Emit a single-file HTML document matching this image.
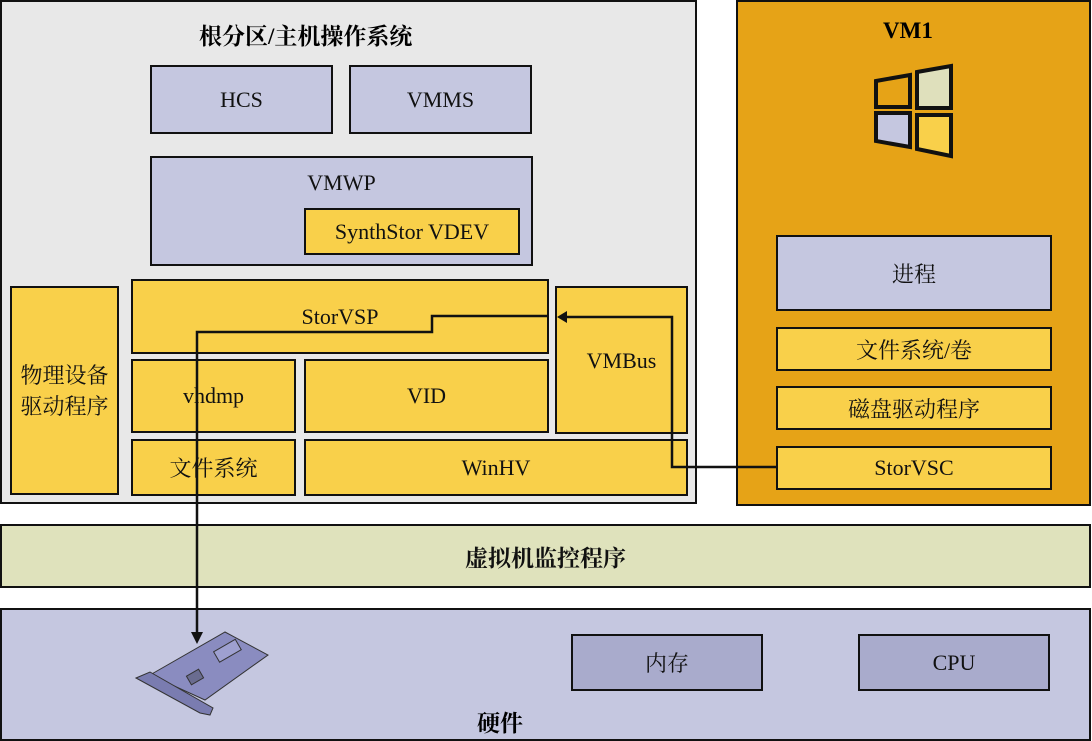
<!DOCTYPE html><html><head><meta charset="utf-8"><style>
body{margin:0;width:1092px;height:741px;background:#fff;position:relative;overflow:hidden;font-family:"Liberation Serif","Noto Serif CJK SC",serif;}
.b{position:absolute;box-sizing:border-box;border:2px solid #111;display:flex;align-items:center;justify-content:center;font-size:22px;color:#111;text-align:center;}
.y{background:#f9d04a}.l{background:#c5c7e0}
.t{position:absolute;font-weight:bold;font-size:23px;}
</style></head><body>
<div class="b" style="left:0;top:0;width:697px;height:504px;background:#e8e8e8"></div>
<div class="t" style="left:199px;top:18px">根分区/主机操作系统</div>
<div class="b l" style="left:150px;top:65px;width:183px;height:69px">HCS</div>
<div class="b l" style="left:349px;top:65px;width:183px;height:69px">VMMS</div>
<div class="b l" style="left:150px;top:156px;width:383px;height:110px;align-items:flex-start;padding-top:12px">VMWP</div>
<div class="b y" style="left:304px;top:208px;width:216px;height:47px">SynthStor VDEV</div>
<div class="b y" style="left:10px;top:286px;width:109px;height:209px;line-height:31px">物理设备<br>驱动程序</div>
<div class="b y" style="left:131px;top:279px;width:418px;height:75px">StorVSP</div>
<div class="b y" style="left:555px;top:286px;width:133px;height:148px;align-items:flex-start;padding-top:60px">VMBus</div>
<div class="b y" style="left:131px;top:359px;width:165px;height:74px">vhdmp</div>
<div class="b y" style="left:304px;top:359px;width:245px;height:74px">VID</div>
<div class="b y" style="left:131px;top:439px;width:165px;height:57px">文件系统</div>
<div class="b y" style="left:304px;top:439px;width:384px;height:57px">WinHV</div>
<div class="b" style="left:736px;top:0;width:355px;height:506px;background:#e6a317"></div>
<div class="t" style="left:883px;top:18px;font-family:'Liberation Serif',serif">VM1</div>
<div class="b l" style="left:776px;top:235px;width:276px;height:76px">进程</div>
<div class="b y" style="left:776px;top:327px;width:276px;height:44px">文件系统/卷</div>
<div class="b y" style="left:776px;top:386px;width:276px;height:44px">磁盘驱动程序</div>
<div class="b y" style="left:776px;top:446px;width:276px;height:44px">StorVSC</div>
<div class="b" style="left:0;top:524px;width:1091px;height:64px;background:#dfe2bc;font-weight:bold;font-size:23px">虚拟机监控程序</div>
<div class="b l" style="left:0;top:608px;width:1091px;height:133px"></div>
<div class="t" style="left:477px;top:705px">硬件</div>
<div class="b" style="left:571px;top:634px;width:192px;height:57px;background:#a9abcc">内存</div>
<div class="b" style="left:858px;top:634px;width:192px;height:57px;background:#a9abcc">CPU</div>
<svg style="position:absolute;left:0;top:0" width="1092" height="741">
<g stroke="#111" stroke-width="4" stroke-linejoin="miter">
<polygon points="876,81 910,75 910,107 876,107" fill="#e6a317"/>
<polygon points="917,72 951,66 951,108 917,108" fill="#dfe0bc"/>
<polygon points="876,113 910,113 910,147 876,141" fill="#c5c7e0"/>
<polygon points="917,115 951,115 951,156 917,149" fill="#f9d04a"/>
</g>
<g fill="none" stroke="#111" stroke-width="2.5">
<polyline points="776,467 672,467 672,317 566,317"/>
<polyline points="548,316 432,316 432,332 197,332 197,636"/>
</g>
<polygon points="557,317 567,311 567,323" fill="#111"/>
<polygon points="197,644 191,632 203,632" fill="#111"/>
<g stroke="#333" stroke-width="1">
<polygon points="150,675 225,632 268,655 205,700" fill="#8a8cc0"/>
<polygon points="136,678 150,672 213,708 210,715 200,713" fill="#7a7cb0"/>
<rect x="215" y="645" width="25" height="12" fill="#9ea0d0" transform="rotate(-30 227 651)"/>
<rect x="188" y="672" width="14" height="10" fill="#6a6c90" transform="rotate(-30 195 677)"/>
</g>
</svg>
</body></html>
